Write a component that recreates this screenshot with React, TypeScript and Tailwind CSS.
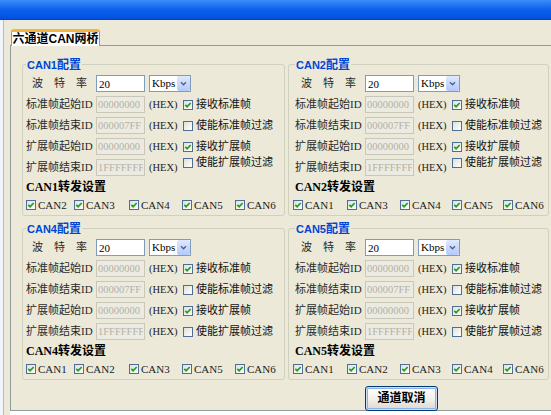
import React from "react";

const SANS = "font-['Liberation_Sans','Noto_Sans_CJK_SC',sans-serif]";

type Group = {
  name: string;
  targets: string[];
  right: boolean;
  top: boolean;
};

const GROUPS: Group[] = [
  { name: "CAN1", targets: ["CAN2", "CAN3", "CAN4", "CAN5", "CAN6"], right: false, top: true },
  { name: "CAN2", targets: ["CAN1", "CAN3", "CAN4", "CAN5", "CAN6"], right: true, top: true },
  { name: "CAN4", targets: ["CAN1", "CAN2", "CAN3", "CAN5", "CAN6"], right: false, top: false },
  { name: "CAN5", targets: ["CAN1", "CAN2", "CAN3", "CAN4", "CAN6"], right: true, top: false },
];

const ROWS = [
  { label: "标准帧起始ID", value: "00000000", check: "接收标准帧", on: true },
  { label: "标准帧结束ID", value: "000007FF", check: "使能标准帧过滤", on: false },
  { label: "扩展帧起始ID", value: "00000000", check: "接收扩展帧", on: true },
  { label: "扩展帧结束ID", value: "1FFFFFFF", check: "使能扩展帧过滤", on: false },
];

function CheckBox({ on }: { on: boolean }) {
  return (
    <span className="w-[10px] h-[10px] shrink-0 border border-[#4f6e96] bg-gradient-to-br from-[#e0e0da] to-white flex items-center justify-center">
      {on && (
        <svg viewBox="0 0 8 8" className="w-[8px] h-[8px]">
          <path d="M1.3 3.9 L3.1 5.7 L6.7 2" stroke="#21a121" strokeWidth="1.7" fill="none" />
        </svg>
      )}
    </span>
  );
}

function IdInput({ value }: { value: string }) {
  return (
    <input
      disabled
      readOnly
      value={value}
      className="ml-[2px] w-[49px] h-[17px] border border-[#c9c7ba] bg-[#ecebe2] px-[1px] text-[10.5px] text-[#b4b1a2]"
    />
  );
}

function Combo() {
  return (
    <div className="ml-[4px] w-[42px] h-[17px] border border-[#7f9db9] bg-white flex items-center">
      <span className="flex-1 pl-[2px] text-[11px] leading-none text-black">Kbps</span>
      <span className="w-[13px] h-[15px] rounded-[2px] bg-gradient-to-b from-[#dfe8fe] to-[#b4c9fa] flex items-center justify-center">
        <svg viewBox="0 0 8 6" className="w-[7px] h-[5px]">
          <path d="M1 1.5 L4 4.5 L7 1.5" stroke="#4d6185" strokeWidth="1.6" fill="none" />
        </svg>
      </span>
    </div>
  );
}

function GroupBox({ g }: { g: Group }) {
  return (
    <fieldset
      className={
        g.right
          ? "min-w-0 rounded-[3px] border border-[#d0d0bf] pl-[6px] pr-[2px] pt-[3px] pb-[4px]"
          : "min-w-0 rounded-[3px] border border-[#d0d0bf] pl-[3px] pr-[2px] pt-[3px] pb-[4px]"
      }
    >
      <legend className="px-[1px] leading-[14px] font-bold text-[#0046d5]">
        <span className={`${SANS} text-[11px]`}>{g.name}</span>
        <span className="text-[12px]">配置</span>
      </legend>

      <div className="flex flex-col gap-[4px]">
        <div className="flex items-center h-[17px]">
          <div className="w-[68px] pl-[6px] flex gap-[11px] text-[11px] text-[#2a2a2a]">
            <span>波</span>
            <span>特</span>
            <span>率</span>
          </div>
          <input
            readOnly
            value="20"
            className="ml-[2px] w-[49px] h-[17px] border border-[#7f9db9] bg-white px-[2px] text-[11px] text-black"
          />
          <Combo />
        </div>

        {ROWS.map((r, i) => (
          <div key={r.label} className="flex items-center h-[17px]">
            <div className="w-[68px] text-[11px] text-[#2a2a2a] whitespace-nowrap">{r.label}</div>
            <IdInput value={r.value} />
            <span className="ml-[4px] w-[34px] text-[10.5px] text-[#222]">(HEX)</span>
            <div
              className={
                g.top && i === 3
                  ? "self-start -mt-[2px] h-[11px] flex items-center"
                  : "flex items-center"
              }
            >
              <CheckBox on={r.on} />
              <span className="ml-[3px] text-[11px] text-[#111] whitespace-nowrap">{r.check}</span>
            </div>
          </div>
        ))}
      </div>

      <div className="mt-[4px] leading-[14px] text-[12px] font-bold text-black">{g.name}转发设置</div>

      <div
        className={
          g.right
            ? "mt-[3px] h-[14px] -ml-[2px] grid grid-cols-[54px_53px_52px_51px_1fr] items-center"
            : "mt-[3px] h-[14px] grid grid-cols-[48px_55px_53px_53px_1fr] items-center"
        }
      >
        {g.targets.map((t) => (
          <div key={t} className="flex items-center">
            <CheckBox on />
            <span className="ml-[2px] text-[11px] text-[#222]">{t}</span>
          </div>
        ))}
      </div>
    </fieldset>
  );
}

export default function App() {
  return (
    <div className="w-[551px] h-[415px] overflow-hidden flex flex-col bg-[#ece9d8] font-['Liberation_Serif','Noto_Sans_CJK_SC',serif]">
      <div className="h-[20px] shrink-0 bg-gradient-to-b from-[#3b8df8] via-[#0b60ec] to-[#0350de] border-b border-[#0142c4]" />

      <div className="flex flex-1 min-h-0">
        <div className="w-[4px] shrink-0 bg-[#f1f4fa] border-r border-[#a8bce4]" />

        <div className="flex-1 flex flex-col pl-[6px] pt-[9px]">
          <div className="flex h-[17px] shrink-0">
            <div className="w-[1px] border-b border-[#919b9c]" />
            <div className="w-[89px] rounded-t-[3px] border-t-[3px] border-t-[#f5b43b] border-x border-x-[#919b9c] bg-white flex items-center justify-center">
              <span className={`${SANS} text-[12px] font-bold text-black leading-none`}>六通道CAN网桥</span>
            </div>
            <div className="flex-1 border-b border-[#919b9c]" />
          </div>

          <div className="h-[365px] shrink-0 border-l border-b border-[#919b9c] pl-[11px] pt-[11px] flex flex-col">
            <div className="grid grid-cols-[263px_261px] gap-x-[3px] gap-y-[5px]">
              {GROUPS.map((g) => (
                <GroupBox key={g.name} g={g} />
              ))}
            </div>

            <div className="mt-[5px] pl-[343px]">
              <button className="w-[73px] h-[25px] rounded-[3px] border border-[#003c74] bg-gradient-to-b from-white via-[#f3f2ec] to-[#dcd7cb] shadow-[inset_0_0_0_1px_#cfdef8,inset_0_0_0_2px_#8fb0ea] text-[12px] font-bold text-black">
                通道取消
              </button>
            </div>
          </div>

          <div className="flex-1 bg-white" />
        </div>
      </div>
    </div>
  );
}
